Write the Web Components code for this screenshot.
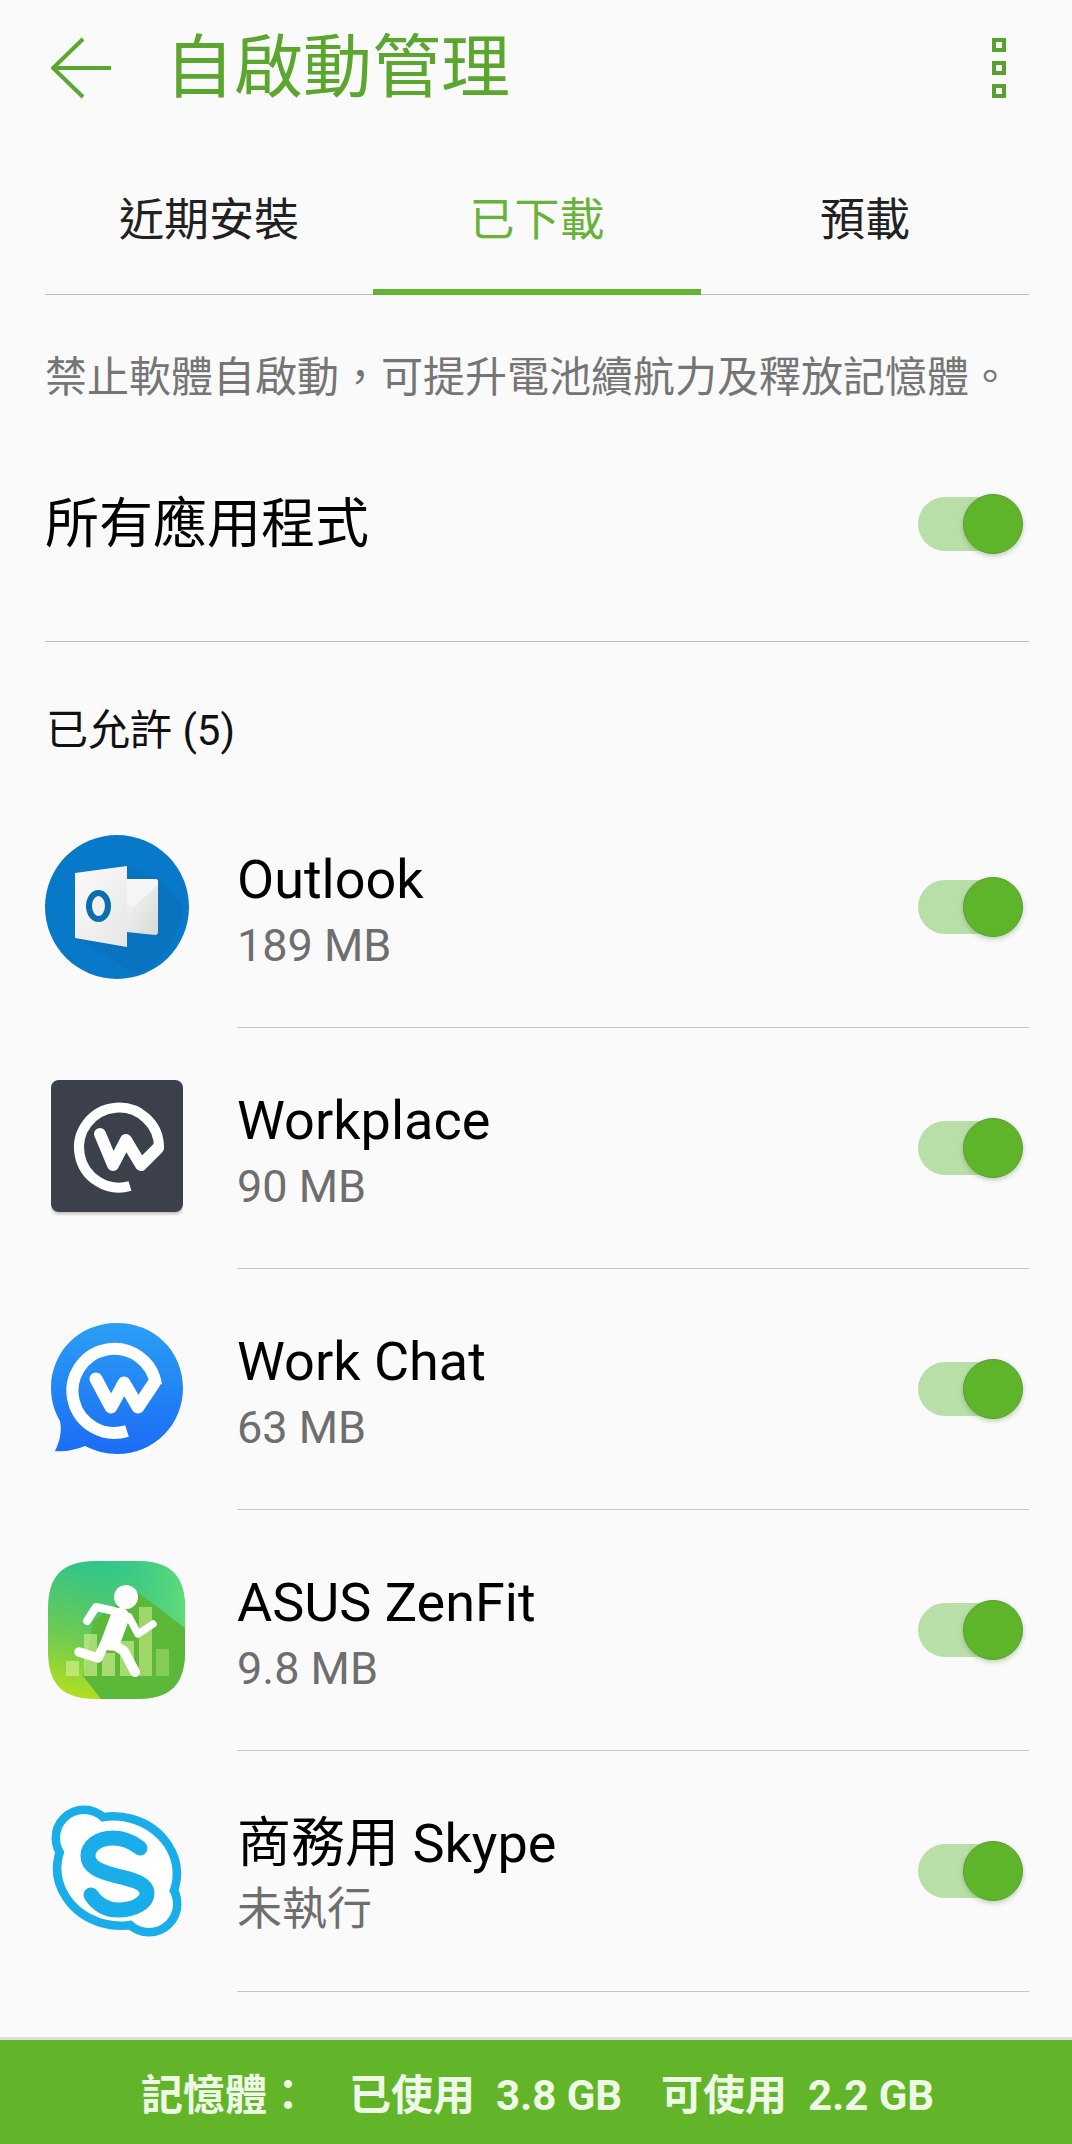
<!DOCTYPE html>
<html lang="zh-Hant"><head><meta charset="utf-8"><title>自啟動管理</title>
<style>
html,body{margin:0;padding:0;background:#fafafa}
body{width:1072px;height:2144px;overflow:hidden;font-family:Roboto,"Noto Sans CJK TC",sans-serif;color:#000}
</style></head><body>
<auto-start-page>
  <app-header slot="header" title-text="自啟動管理"></app-header>
  <tab-bar slot="tabs"></tab-bar>
  <hint-text>禁止軟體自啟動，可提升電池續航力及釋放記憶體。</hint-text>
  <master-row>所有應用程式</master-row>
  <section-label>已允許 (5)</section-label>
  <app-row name="Outlook" size="189 MB"><app-icon kind="outlook"></app-icon></app-row>
  <app-row name="Workplace" size="90 MB"><app-icon kind="workplace"></app-icon></app-row>
  <app-row name="Work Chat" size="63 MB"><app-icon kind="workchat"></app-icon></app-row>
  <app-row name="ASUS ZenFit" size="9.8 MB"><app-icon kind="zenfit"></app-icon></app-row>
  <app-row name="商務用 Skype" size="未執行"><app-icon kind="skype"></app-icon></app-row>
  <memory-bar></memory-bar>
</auto-start-page>
<script>
const mk=(name,css,html)=>{customElements.define(name,class extends HTMLElement{
  connectedCallback(){ if(this.shadowRoot) return; const r=this.attachShadow({mode:'open'});
    r.innerHTML=`<style>${css}</style>${typeof html==='function'?html(this):html}`; }
});};
const CJK='Roboto,"Noto Sans CJK TC",sans-serif';
mk('auto-start-page',`:host{display:flex;flex-direction:column;width:1072px;height:2144px;font-family:${CJK}}`,`<slot name="header"></slot><slot name="tabs"></slot><slot></slot>`);
mk('app-header',`:host{display:flex;align-items:center;height:136px;padding:0 66px 0 51px;box-sizing:border-box;color:#5aa62f}
 svg{display:block;flex:none}
 h1{margin:0 0 0 52px;font-size:69px;font-weight:400;line-height:136px;flex:1;position:relative;top:1px}
 .menu{display:flex;flex-direction:column;gap:9px}
 .menu i{display:block;width:14px;height:14px;box-sizing:border-box;border:4px solid #55a22c}`,
 h=>`<svg width="62" height="64" viewBox="0 0 62 64"><path d="M32 3 2 32 32 61M2 32H60" fill="none" stroke="#5aa62f" stroke-width="4"/></svg><h1>${h.getAttribute('title-text')}</h1><div class="menu"><i></i><i></i><i></i></div>`);
mk('tab-bar',`:host{display:flex;margin:0 43px 0 45px;height:159px;box-sizing:border-box;border-bottom:1px solid #bdbdbd}
 div{flex:1;display:flex;align-items:center;justify-content:center;padding-top:2px;box-sizing:border-box;font-size:45px;color:#212121;height:159px}
 .on{color:#68b23a;border-bottom:6px solid #66b233;padding-top:8px}`,
 `<div>近期安裝</div><div class="on">已下載</div><div>預載</div>`);
mk('hint-text',`:host{display:block;margin:0 45px;height:163px;box-sizing:border-box;padding-top:54px;font-size:42px;line-height:58px;color:#757575;white-space:nowrap}`,`<slot></slot>`);
mk('on-toggle',`:host{display:block;position:relative;width:105px;height:60px;flex:none}
 .t{position:absolute;left:0;top:3px;width:100px;height:54px;border-radius:27px;background:#b9dfa8}
 .k{position:absolute;right:0;top:0;width:60px;height:60px;box-sizing:border-box;border-radius:50%;background:#5fb52a;border:1px solid #5b9a3a;box-shadow:0 2px 5px rgba(70,130,40,.35)}`,
 `<div class="t"></div><div class="k"></div>`);
mk('master-row',`:host{display:flex;align-items:center;justify-content:space-between;margin:0 49px 0 45px;height:183px;padding-bottom:52px;box-sizing:border-box;font-size:54px}
 span{line-height:70px;padding-top:3px}`,`<span><slot></slot></span><on-toggle></on-toggle>`);
mk('section-label',`:host{display:block;margin:0 43px 0 45px;height:146px;box-sizing:border-box;border-top:1px solid #bdbdbd;padding:59px 1px 0;font-size:42px;line-height:60px;color:#111}`,`<slot></slot>`);
mk('app-row',`:host{display:flex;align-items:center;height:241px;margin-right:43px;box-sizing:border-box;flex:none}
 .ic{width:237px;flex:none;display:flex;align-items:center;box-sizing:border-box;height:100%;padding-bottom:2px}
 .main{flex:1;height:100%;display:flex;align-items:center;justify-content:space-between;box-sizing:border-box;border-bottom:1px solid #c4c4c4;padding-right:6px}
 .n{font-size:54px;line-height:66px;color:#000}.s{font-size:45px;line-height:66px;color:#6e6e6e}
 .tx{padding-top:12px}`,
 h=>`<div class="ic"><slot></slot></div><div class="main"><div class="tx"><div class="n">${h.getAttribute('name')}</div><div class="s">${h.getAttribute('size')}</div></div><on-toggle></on-toggle></div>`);
const icons={
outlook:`<svg width="144" height="144" viewBox="0 0 144 144" style="margin-left:45px"><defs><linearGradient id="od" x1="0" y1="0" x2="1" y2="1"><stop offset="0" stop-color="#fbfbfb"/><stop offset="1" stop-color="#e6e6e6"/></linearGradient><linearGradient id="oe" x1="0" y1="0" x2="1" y2="1"><stop offset="0" stop-color="#f8f8f8"/><stop offset="1" stop-color="#d8d8d6"/></linearGradient></defs><circle cx="72" cy="72" r="72" fill="#0878c8"/><path d="M82 31 113 44 138 70C136 100 118 128 92 139L30 103Z" fill="#0a6cb6" opacity=".45"/><path d="M82 44H110Q113 44 113 47V97Q113 100 110 100L82 97Z" fill="url(#oe)"/><path d="M82 44H110Q113 44 113 47V50L88 72 82 68Z" fill="#f5f5f4"/><path d="M30 38 82 31V112L30 103Z" fill="url(#od)"/><ellipse cx="53.5" cy="71" rx="9.5" ry="13" fill="none" stroke="#0c6db0" stroke-width="6"/></svg>`,
workplace:`<svg width="132" height="136" viewBox="0 0 132 136" style="margin-left:51px"><defs><filter id="s" x="-10%" y="-10%" width="120%" height="120%"><feDropShadow dx="0" dy="2" stdDeviation="1.5" flood-color="#000" flood-opacity=".25"/></filter></defs><rect width="132" height="132" rx="8" fill="#3a3f4c" filter="url(#s)"/><path d="M79 106A40 40 0 1 1 108 68" fill="none" stroke="#fff" stroke-width="10"/><path d="M49 54 62 85 75 60 90 85 107 68" fill="none" stroke="#fff" stroke-width="12" stroke-linejoin="round" stroke-linecap="round"/></svg>`,
workchat:`<svg width="132" height="132" viewBox="0 0 132 132" style="margin-left:51px"><defs><linearGradient id="g" x1="0" y1="0" x2="0" y2="1"><stop offset="0" stop-color="#2a9ff5"/><stop offset="1" stop-color="#1c6cf6"/></linearGradient></defs><path d="M66 0C104 0 132 29 132 65S104 131 66 131C55 131 44 128 34 123 24 127 14 129 4 128 9 118 11 108 9 98 3 88 0 77 0 65 0 29 28 0 66 0Z" fill="url(#g)"/><path d="M76 108A42 42 0 1 1 105 62" fill="none" stroke="#fff" stroke-width="12"/><path d="M45 56 60 84 73 60 87 84 103 60" fill="none" stroke="#fff" stroke-width="13" stroke-linejoin="round" stroke-linecap="round"/></svg>`,
zenfit:`<svg width="137" height="138" viewBox="0 0 137 138" style="margin-left:48px"><defs><linearGradient id="z" x1=".3" y1="0" x2=".1" y2="1"><stop offset="0" stop-color="#2fc48b"/><stop offset=".55" stop-color="#6ecb52"/><stop offset="1" stop-color="#b7e01c"/></linearGradient><linearGradient id="z2" x1="0" y1="0" x2="1" y2="0"><stop offset=".2" stop-color="#2fc48b" stop-opacity="0"/><stop offset="1" stop-color="#5fdb7a"/></linearGradient><clipPath id="zc"><path d="M48 0H89C124 0 137 16 137 48V90C137 122 124 138 89 138H48C13 138 0 122 0 90V48C0 16 13 0 48 0Z"/></clipPath></defs><g clip-path="url(#zc)"><rect width="137" height="138" fill="url(#z)"/><rect width="137" height="80" fill="url(#z2)"/><path d="M88 30 137 67V138H53L35 115 45 60Z" fill="#5cb838"/><g fill="#d8f29a" opacity=".6"><rect x="18" y="100" width="13" height="15"/><rect x="36" y="73" width="13" height="42"/><rect x="54" y="92" width="13" height="23"/><rect x="72" y="80" width="14" height="35"/></g><g fill="#b5e07a" opacity=".75"><rect x="91" y="46" width="13" height="69"/></g><rect x="108" y="88" width="13" height="27" fill="#8fd060" opacity=".8"/></g><g fill="none" stroke="#fff" stroke-linecap="round" stroke-linejoin="round"><ellipse cx="78" cy="36" rx="12" ry="12" fill="#fff" stroke="none"/><path d="M72 56 63 80" stroke-width="19"/><path d="M66 84 76 90 87 111" stroke-width="10"/><path d="M58 80 50 97 31 91" stroke-width="9.5"/><path d="M66 50 48 46 39 60" stroke-width="8"/><path d="M81 56 90 73 105 63" stroke-width="7.5"/></g></svg>`,
skype:`<svg width="133" height="132" viewBox="0 0 133 132" style="margin-left:50px"><g stroke="#19aee9" stroke-width="17" fill="#19aee9"><circle cx="34" cy="33" r="24"/><circle cx="99" cy="99" r="24"/><ellipse cx="67" cy="66" rx="56" ry="50" transform="rotate(15 67 66)"/></g><g fill="#fff"><circle cx="34" cy="33" r="24"/><circle cx="99" cy="99" r="24"/><ellipse cx="67" cy="66" rx="56" ry="50" transform="rotate(15 67 66)"/></g><path d="M90 43C80 35 72 33 63 33 48 33 38 41 38 51 38 62 50 67 67 71 85 75 97 79 97 88 97 98 84 105 68 105 56 105 47 99 41 90" fill="none" stroke="#19aee9" stroke-width="15" stroke-linecap="round"/></svg>`};
mk('app-icon',`:host{display:block;line-height:0}svg{display:block}`,h=>icons[h.getAttribute('kind')]);
mk('memory-bar',`:host{display:flex;align-items:center;margin-top:45px;height:107px;box-sizing:border-box;border-top:3px solid #dcdedb;background:#62b529;color:#eef9e6;font-size:42px;font-weight:700;padding:0 0 2px 141px;white-space:nowrap;flex:none}
 .a{width:208px}.b{width:312px}
 span{display:inline-block}`,
 `<span class="a">記憶體：</span><span class="b">已使用&nbsp; 3.8 GB</span><span>可使用&nbsp; 2.2 GB</span>`);
</script>
</body></html>
